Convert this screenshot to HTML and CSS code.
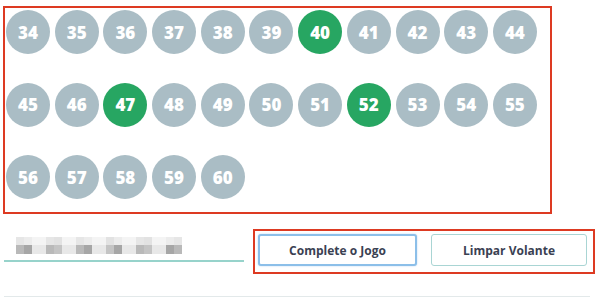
FILE: index.html
```html
<!DOCTYPE html>
<html lang="pt">
<head>
<meta charset="utf-8">
<title>Volante</title>
<link rel="stylesheet" href="styles.css">
</head>
<body>
<div class="page">
  <div class="board">
    <span class="ball">34</span><span class="ball">35</span><span class="ball">36</span><span class="ball">37</span><span class="ball">38</span><span class="ball">39</span><span class="ball on">40</span><span class="ball">41</span><span class="ball">42</span><span class="ball">43</span><span class="ball">44</span>
    <span class="ball">45</span><span class="ball">46</span><span class="ball on">47</span><span class="ball">48</span><span class="ball">49</span><span class="ball">50</span><span class="ball">51</span><span class="ball on">52</span><span class="ball">53</span><span class="ball">54</span><span class="ball">55</span>
    <span class="ball">56</span><span class="ball">57</span><span class="ball">58</span><span class="ball">59</span><span class="ball">60</span>
  </div>
  <div class="bottom">
    <div class="field">
      <div class="mosaic">
        <span class="m a"></span><span class="m b"></span><span class="m gap"></span>
        <span class="m a"></span><span class="m c"></span><span class="m gap"></span>
        <span class="m a"></span><span class="m b"></span><span class="m gap"></span>
        <span class="m c"></span><span class="m b"></span><span class="m gap"></span>
        <span class="m a"></span><span class="m c"></span><span class="m gap"></span>
        <span class="m b"></span><span class="m a"></span>
      </div>
    </div>
    <div class="actions">
      <button class="btn focus">Complete o Jogo</button>
      <button class="btn">Limpar Volante</button>
    </div>
  </div>
  <div class="rule"></div>
</div>
</body>
</html>
```
FILE: styles.css
```css
* { box-sizing: border-box; }
html, body { margin: 0; padding: 0; background: #fff; }
body { font-family: "Open Sans", "Lato", sans-serif; width: 600px; height: 301px; overflow: hidden; }
.page { padding: 6px 0 0 3px; }
.board {
  width: 549px;
  height: 208px;
  border: 2px solid #dd3a22;
  padding: 2px 0 0 1px;
  display: flex;
  flex-wrap: wrap;
  align-content: flex-start;
  column-gap: 4.7px;
  row-gap: 28.5px;
}
.ball {
  width: 44px;
  height: 44px;
  border-radius: 50%;
  background: #aabdc5;
  color: #fff;
  font-weight: 800;
  font-size: 17px;
  display: flex;
  align-items: center;
  justify-content: center;
}
.ball.on { background: #27a662; }
.bottom {
  display: flex;
  align-items: flex-start;
  margin-top: 15px;
}
.field {
  width: 240px;
  height: 33px;
  margin-left: 1px;
  border-bottom: 2px solid #97d3cb;
  padding: 8px 0 0 12px;
}
.mosaic { display: flex; height: 17px; }
.m { width: 8px; height: 17px; background: linear-gradient(#e6e6e6 0 50%, #b9b9b9 50% 100%); }
.m.b { background: linear-gradient(#ececec 0 50%, #a6a6a6 50% 100%); }
.m.c { background: linear-gradient(#e2e2e2 0 50%, #c4c4c4 50% 100%); }
.m.gap { width: 14px; background: linear-gradient(#f4f4f4 0 50%, #e8e8e8 50% 100%); }
.actions {
  margin-left: 9px;
  width: 342px;
  height: 45px;
  border: 2px solid #dd3a22;
  padding: 3px 6px 0 3px;
  display: flex;
  gap: 14px;
}
.btn {
  font-family: "Open Sans", "Lato", sans-serif;
  font-weight: 700;
  font-size: 12px;
  color: #3a4152;
  background: #fff;
  height: 32px;
  border: 1px solid #a9d5d4;
  border-radius: 3px;
  flex: 1;
  padding: 0;
}
.btn.focus { border: 2px solid #8cbfe9; box-shadow: 0 0 2px #b7d6f1; flex: 0 0 159px; }
.rule {
  margin: 22px 0 0 1px;
  width: 586px;
  height: 1px;
  background: #e3e9ea;
}
```
